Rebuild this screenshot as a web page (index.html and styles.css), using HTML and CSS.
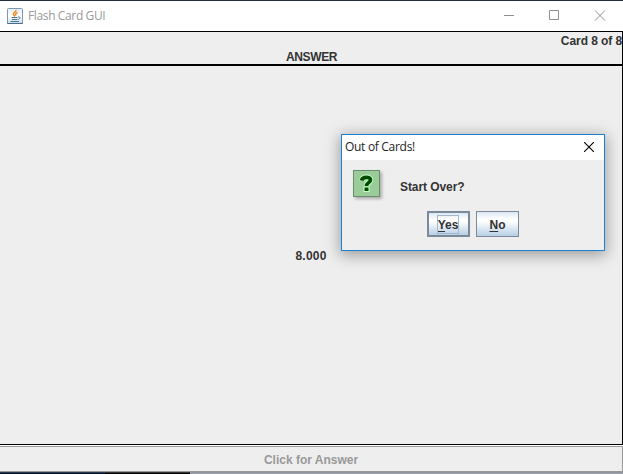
FILE: index.html
```html
<!DOCTYPE html>
<html lang="en">
<head>
<meta charset="utf-8">
<title>Flash Card GUI</title>
<link rel="stylesheet" href="styles.css">
</head>
<body>
<div class="window">
  <header class="titlebar">
    <svg class="java" width="16" height="16" viewBox="0 0 16 16">
      <defs><linearGradient id="tile" x1="0" y1="0" x2="0" y2="1"><stop offset="0" stop-color="#e4edf3"/><stop offset=".5" stop-color="#fff"/><stop offset="1" stop-color="#cbdce8"/></linearGradient></defs>
      <rect x=".5" y=".5" width="15" height="15" rx="1" fill="url(#tile)" stroke="#7d98ae"/>
      <path d="M.5 14.5v1h15v-1" fill="none" stroke="#466d8b"/>
      <path d="M9 2C9.500 4 5.500 4.500 6.500 6.500L8 8.500M10.500 4.500C8 5.500 8.500 6.500 9 7.500" fill="none" stroke="#ee8a2c" stroke-width="1.500"/>
      <path d="M4.500 9.500h6M5 11.500h5.500M3.500 13.500h8.500M11 9c3-.5 2 2 .3 2.500" fill="none" stroke="#4c7592"/>
    </svg>
    <span class="title">Flash Card GUI</span>
    <svg class="controls" width="104" height="11" viewBox="0 0 104 11" fill="none" stroke="#8f8f8f">
      <path d="M0 5.500h10M45.500.5h9v9h-9z"/><path d="M91 .5l10 10M101 .5l-10 10"/>
    </svg>
  </header>
  <main class="content">
    <section class="heading">
      <div class="count">Card 8 of 8</div>
      <div class="answer">ANSWER</div>
    </section>
    <section class="card"><span class="value">8.000</span></section>
  </main>
  <button class="reveal" disabled>Click for Answer</button>
  <div class="desktop"><i class="navy"></i><i class="black"></i><i class="gray"></i></div>
</div>
<div class="dialog" role="dialog">
  <div class="dialog-bar">
    <span class="dialog-title">Out of Cards!</span>
    <svg width="10" height="10" viewBox="0 0 10 10" stroke="#000" stroke-width="1.100"><path d="M0 0l10 10M10 0L0 10"/></svg>
  </div>
  <div class="message">
    <svg class="question" width="27" height="27" viewBox="0 0 27 27">
      <rect x=".5" y=".5" width="26" height="26" fill="#9c9" stroke="#698c69"/>
      <g fill="none"><path d="M9 10.500C9.500 6.500 17.500 6.500 17.500 9.800C17.500 12.800 13.500 12.500 13.500 16" stroke="#c9ffc9" stroke-width="5.600"/><path d="M10.500 16.500h6v5.500h-6z" fill="#c9ffc9"/>
      <path d="M8.500 10.500C9.500 6.500 17.500 6.500 17.500 9.800C17.500 12.800 13.500 12.500 13.500 16" stroke="#004b00" stroke-width="3.700"/><path d="M11.500 17.500h4v3.500h-4z" fill="#004b00"/></g>
    </svg>
    <span class="prompt">Start Over?</span>
  </div>
  <div class="actions">
    <button class="choice default"><span class="focus"><u>Y</u>es</span></button>
    <button class="choice"><span class="label"><u>N</u>o</span></button>
  </div>
</div>
</body>
</html>
```
FILE: styles.css
```css
* { box-sizing: border-box; }
body {
  margin: 0;
  width: 623px;
  height: 474px;
  overflow: hidden;
  background: #eee;
  color: #333;
  font: bold 12px/16px "Liberation Sans", Arial, sans-serif;
}
button { font: inherit; color: inherit; padding: 0; margin: 0; }
svg { display: block; }
.window { height: 474px; display: flex; flex-direction: column; }
.titlebar {
  height: 31px;
  flex: none;
  display: flex;
  align-items: center;
  padding: 0 18px 1px 7px;
  border-top: 1px solid #252f3d;
  background: #fff;
}
.java { margin-right: 5px; }
.title {
  color: #999;
  font: 12px/16px "Open Sans", sans-serif;
  letter-spacing: -.37px;
}
.controls { margin-left: auto; margin-right: -3px; }
.content {
  height: 414px;
  flex: none;
  display: flex;
  flex-direction: column;
  border: solid #000;
  border-width: 1px 1px 1px 0;
}
.heading { height: 34px; border-bottom: 2px solid #000; padding-top: 1px; }
.count { text-align: right; white-space: nowrap; letter-spacing: -.08px; }
.answer { text-align: center; letter-spacing: -.35px; padding-left: 1px; }
.card { flex: 1; display: flex; align-items: center; justify-content: center; padding-top: 2px; }
.value { letter-spacing: .2px; }
.reveal {
  height: 27px;
  flex: none;
  border: solid #999;
  border-width: 1px 1px 2px 0;
  margin-top: 1px;
  padding-top: 2px;
  background: #eee;
  color: #999;
  box-shadow: 0 -1px #fff;
}
.desktop { height: 2px; display: flex; margin-top: -1px; z-index: 1; }
.navy { width: 105px; background: linear-gradient(#29394a 50%, #06142b 50%); }
.black { width: 85px; background: linear-gradient(#333 50%, #000 50%); }
.gray { flex: 1; background: linear-gradient(#939599 50%, #9da3ad 50%); }
.dialog {
  position: absolute;
  left: 341px;
  top: 134px;
  width: 264px;
  height: 117px;
  border: 1px solid #1b80d1;
  background: #eee;
  box-shadow: 0 3px 14px 1px rgba(0, 0, 0, .36);
}
.dialog-bar {
  height: 25px;
  display: flex;
  align-items: center;
  justify-content: space-between;
  padding: 0 10px 1px 3px;
  background: #fff;
}
.dialog-title { color: #222; font: 12px/16px "Open Sans", sans-serif; letter-spacing: -.3px; }
.message { height: 51px; padding: 10px 11px 0; display: flex; }
.question { box-shadow: 2px 2px 3px rgba(0, 0, 0, .28); }
.prompt { margin: 9px 0 0 20px; letter-spacing: -.08px; }
.actions { display: flex; justify-content: center; gap: 6px; }
.choice {
  width: 43px;
  height: 26px;
  display: flex;
  align-items: center;
  justify-content: center;
  border: 1px solid #7a8a99;
  background: linear-gradient(#dde8f3, #fff 30%, #fff 38%, #b8cfe5);
}
.choice.default { border-width: 2px; }
.focus { outline: 1px solid #a3b8cc; padding-top: 1px; margin-right: 1px; }
.label { padding-top: 2px; }
u { text-decoration-thickness: 1px; text-underline-offset: 2px; }
```
